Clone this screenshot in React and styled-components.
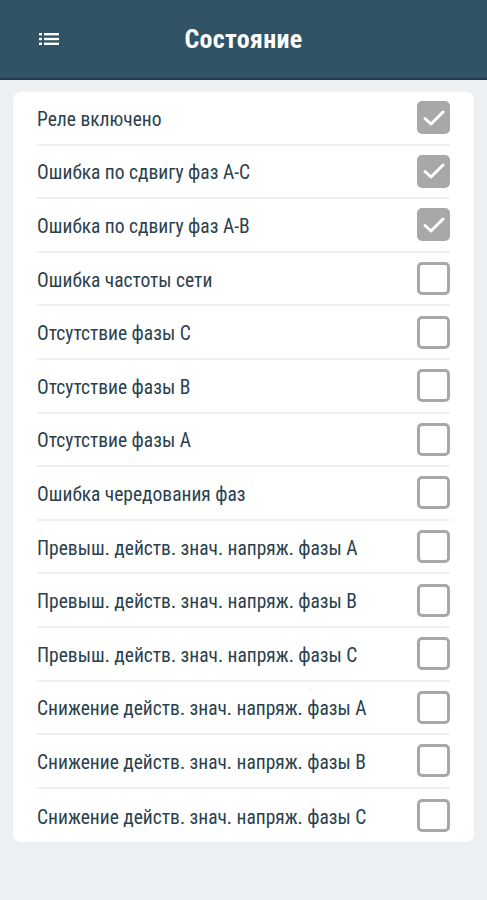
import React from 'react'
import styled, { createGlobalStyle } from 'styled-components'

const GlobalStyle = createGlobalStyle`
  html, body {
    margin: 0;
    padding: 0;
    background: #ecf0f3;
  }
  body {
    font-family: "Roboto Condensed", "Liberation Sans Narrow", Roboto, sans-serif;
  }
`

const Page = styled.div`
  min-height: 900px;
  background: #ecf0f3;
`

const Header = styled.header`
  height: 78px;
  background: #305466;
  border-bottom: 2px solid #1f3d4c;
  display: flex;
  align-items: center;
  justify-content: center;
  position: relative;
`

const MenuButton = styled.div`
  position: absolute;
  left: 39px;
  top: 32px;
  width: 20px;
  height: 14px;
  display: flex;
`

const Title = styled.h1`
  margin: 0;
  color: #ffffff;
  font-family: "Roboto Condensed", "Liberation Sans Narrow", Roboto, sans-serif;
  font-weight: 700;
  font-size: 26px;
  letter-spacing: 0.3px;
`

const Card = styled.div`
  margin: 12px 13px 0;
  background: #ffffff;
  border-radius: 8px;
  padding: 0 24px;
`

const Row = styled.div`
  height: 53.6px;
  display: flex;
  align-items: center;
  justify-content: space-between;
  border-bottom: ${p => (p.$last ? 'none' : '2px solid #eef1f3')};
  box-sizing: border-box;
`

const Label = styled.span`
  color: #2a414d;
  font-size: 19.5px;
  padding-top: 3px;
`

const Box = styled.div`
  width: 33px;
  height: 33px;
  box-sizing: border-box;
  border-radius: 5px;
  border: 3px solid #a8a8a8;
  background: ${p => (p.$checked ? '#a8a8a8' : '#ffffff')};
  display: flex;
  align-items: center;
  justify-content: center;
`

const items = [
  ['Реле включено', true],
  ['Ошибка по сдвигу фаз А-С', true],
  ['Ошибка по сдвигу фаз А-В', true],
  ['Ошибка частоты сети', false],
  ['Отсутствие фазы С', false],
  ['Отсутствие фазы В', false],
  ['Отсутствие фазы А', false],
  ['Ошибка чередования фаз', false],
  ['Превыш. действ. знач. напряж. фазы А', false],
  ['Превыш. действ. знач. напряж. фазы В', false],
  ['Превыш. действ. знач. напряж. фазы С', false],
  ['Снижение действ. знач. напряж. фазы А', false],
  ['Снижение действ. знач. напряж. фазы В', false],
  ['Снижение действ. знач. напряж. фазы С', false],
]

const MenuIcon = () => (
  <svg width="20" height="14" viewBox="0 0 20 14">
    <g fill="#ffffff">
      <rect x="0" y="1" width="3" height="2.4" />
      <rect x="0" y="5.8" width="3" height="2.4" />
      <rect x="0" y="10.6" width="3" height="2.4" />
      <rect x="5" y="1" width="15" height="2.4" />
      <rect x="5" y="5.8" width="15" height="2.4" />
      <rect x="5" y="10.6" width="15" height="2.4" />
    </g>
  </svg>
)

const Check = () => (
  <svg width="22" height="18" viewBox="0 0 22 18">
    <path d="M2 9.5 L8 15 L20 3" fill="none" stroke="#ffffff" strokeWidth="3" strokeLinecap="round" strokeLinejoin="round" />
  </svg>
)

export default function App() {
  return (
    <Page>
      <GlobalStyle />
      <Header>
        <MenuButton>
          <MenuIcon />
        </MenuButton>
        <Title>Состояние</Title>
      </Header>
      <Card>
        {items.map(([label, checked], i) => (
          <Row key={label} $last={i === items.length - 1}>
            <Label>{label}</Label>
            <Box $checked={checked}>{checked && <Check />}</Box>
          </Row>
        ))}
      </Card>
    </Page>
  )
}
